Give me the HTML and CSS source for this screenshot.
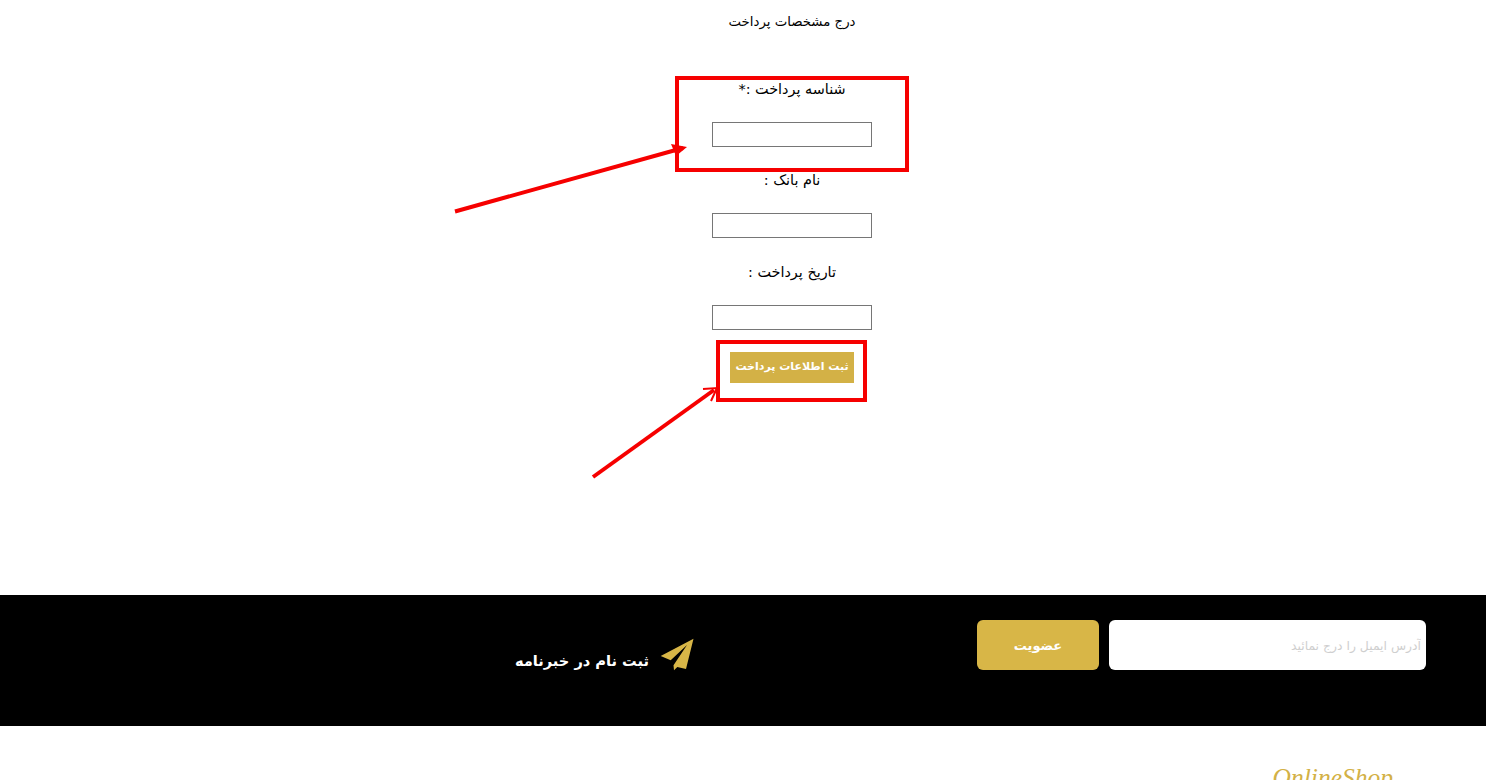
FILE: index.html
```html
<!doctype html>
<html lang="fa" dir="rtl">
    <head>
        <meta charset="UTF-8" />
        <meta name="viewport" content="width=device-width, initial-scale=1.0" />
        <title>درج مشخصات پرداخت</title>
        <link rel="stylesheet" href="styles.css">
    </head>
    <body>
        <div class="page">
            <main class="content">
                <form class="payment-form">
                    <h1 class="form-title">درج مشخصات پرداخت</h1>

                    <label class="field-label field-label-first" for="paymentId">شناسه پرداخت :*</label>
                    <input class="field-input" type="text" id="paymentId" />

                    <label class="field-label" for="bankName">نام بانک :</label>
                    <input class="field-input" type="text" id="bankName" />

                    <label class="field-label" for="paymentDate">تاریخ پرداخت :</label>
                    <input class="field-input" type="text" id="paymentDate" />

                    <button class="submit-button" type="button">ثبت اطلاعات پرداخت</button>
                </form>
            </main>

            <!-- Newsletter -->
            <section class="newsletter">
                <div class="newsletter-form">
                    <input class="email-input" type="text" placeholder="آدرس ایمیل را درج نمائید" />
                    <button class="join-button" type="button">عضویت</button>
                </div>
                <div class="newsletter-title">
                    <svg class="plane-icon" width="36" height="34" viewBox="0 0 36 34" aria-hidden="true">
                        <path d="M34.5 0.7 L1.7 18 L11.7 22.3 L28 7 L14.5 27.3 L15 32.3 L18.3 29 L27 31 Z" fill="#d8b647" />
                    </svg>
                    <span class="newsletter-text">ثبت نام در خبرنامه</span>
                </div>
            </section>

            <footer class="footer">
                <div class="logo">OnlineShop</div>
            </footer>

            <!-- Red marks drawn over the page -->
            <svg class="marks" width="1486" height="780" viewBox="0 0 1486 780" aria-hidden="true">
                <rect x="677" y="78" width="230" height="92" fill="none" stroke="#f60000" stroke-width="4" />
                <rect x="718" y="342" width="147" height="58" fill="none" stroke="#f60000" stroke-width="4" />
                <path d="M455 211.5 L683 148" fill="none" stroke="#f60000" stroke-width="4" />
                <path d="M671 144 L687 147 L676 156 Z" fill="#f60000" />
                <path d="M593 477 L714 390" fill="none" stroke="#f60000" stroke-width="4" />
                <path d="M703 389 L717 388 L711 401" fill="none" stroke="#f60000" stroke-width="2" />
            </svg>
        </div>
    </body>
</html>
```

FILE: styles.css
```css
html, body {
    margin: 0;
    padding: 0;
    background-color: #fff;
}
.page {
    position: relative;
    height: 780px;
    overflow: hidden;
    font-family: "DejaVu Sans", "Noto Sans", sans-serif;
}
.content {
    height: 595px;
    display: flex;
    justify-content: center;
    padding-left: 98px;
    box-sizing: border-box;
}
.payment-form {
    width: 320px;
    display: flex;
    flex-direction: column;
    align-items: center;
}
.form-title {
    margin: 12px 0 0;
    height: 20px;
    line-height: 20px;
    font-size: 13.3px;
    font-weight: normal;
    color: #000;
}
.field-label {
    height: 20px;
    line-height: 22px;
    margin-top: 22.4px;
    font-size: 14.4px;
    color: #000;
}
.field-label-first {
    margin-top: 46px;
}
.field-input {
    width: 160px;
    height: 25px;
    box-sizing: border-box;
    margin-top: 24px;
    border: 1px solid #767676;
    background: #fff;
    padding: 1px 2px;
}
.submit-button {
    width: 124px;
    height: 31px;
    margin-top: 22px;
    padding: 0 0 2px;
    border: none;
    background-color: #d3b146;
    color: #fff;
    font-family: inherit;
    font-size: 11px;
    font-weight: bold;
    white-space: nowrap;
}
.newsletter {
    height: 131px;
    box-sizing: border-box;
    background-color: #000;
    display: flex;
    padding: 25px 60px 0 0;
}
.newsletter-form {
    display: flex;
    gap: 10px;
    height: 50px;
}
.email-input {
    width: 317px;
    height: 50px;
    box-sizing: border-box;
    border: none;
    border-radius: 6px;
    background-color: #fff;
    padding: 0 5px;
    font-family: inherit;
    font-size: 12.4px;
}
.email-input::placeholder {
    color: #cfcfcf;
}
.join-button {
    width: 122px;
    height: 50px;
    border: none;
    border-radius: 6px;
    background-color: #d8b647;
    color: #fff;
    font-family: inherit;
    font-size: 13px;
    font-weight: bold;
}
.newsletter-title {
    display: flex;
    align-items: center;
    gap: 10px;
    height: 34px;
    margin: 18px 282px 0 0;
}
.plane-icon {
    flex: none;
}
.newsletter-text {
    margin-top: 10px;
    color: #fff;
    font-size: 14.6px;
    font-weight: bold;
    white-space: nowrap;
}
.footer {
    height: 54px;
    display: flex;
    background-color: #fff;
    padding-right: 93px;
}
.logo {
    padding-top: 37px;
    font-family: "Liberation Serif", serif;
    font-style: italic;
    font-size: 25.5px;
    color: #d3b146;
}
.marks {
    position: absolute;
    top: 0;
    left: 0;
    pointer-events: none;
}
```
